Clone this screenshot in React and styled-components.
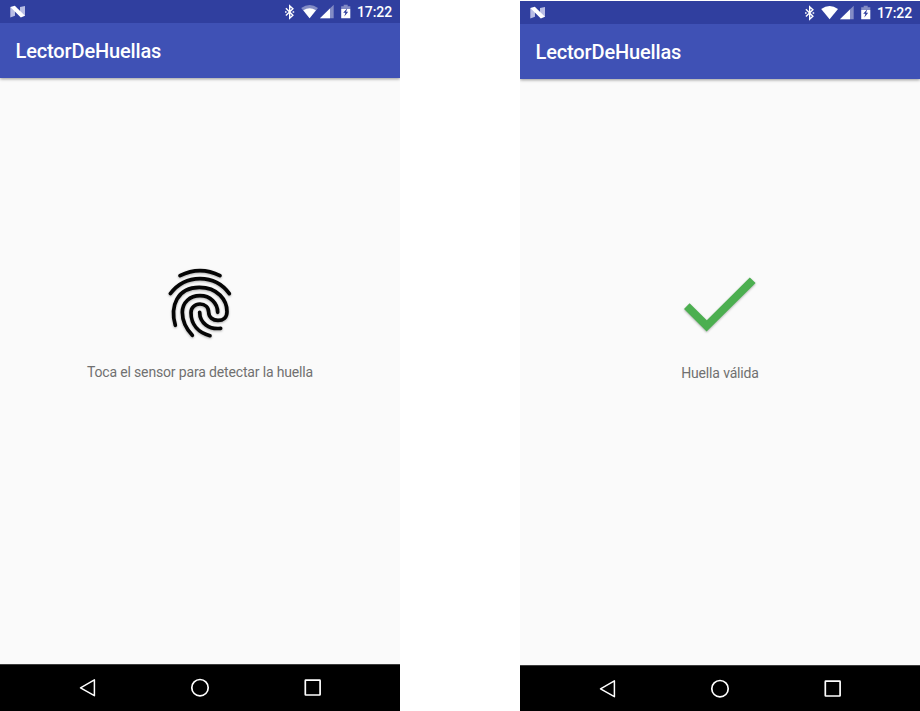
import React from "react";
import styled, { createGlobalStyle } from "styled-components";

const GlobalStyle = createGlobalStyle`
  * { box-sizing: border-box; }
  body { margin: 0; background: #fff; font-family: Roboto, "Liberation Sans", sans-serif; }
  svg { display: block; flex: none; }
`;

const Gallery = styled.main`
  display: flex;
  justify-content: space-between;
  width: 920px;
  height: 711px;
  overflow: hidden;
`;

const Phone = styled.section`
  display: flex;
  flex-direction: column;
  width: 400px;
  height: 711px;
  margin-top: ${({ $top }) => $top}px;
  background: #fafafa;
`;

const StatusBar = styled.div`
  display: flex;
  justify-content: space-between;
  height: 23px;
  flex: none;
  background: #303f9f;
  color: #fff;
`;

const StatusIcons = styled.div`
  display: flex;
`;

const Clock = styled.time`
  width: 43px;
  padding-top: 1px;
  font-size: 14px;
  font-weight: 500;
  line-height: 23px;
  letter-spacing: -0.1px;
  white-space: nowrap;
`;

const AppBar = styled.header`
  display: flex;
  align-items: center;
  height: 55px;
  flex: none;
  padding: 1px 16px 0 15.5px;
  background: #3f51b5;
  box-shadow: 0 1px 3px rgba(0, 0, 0, 0.4);
  clip-path: inset(0 0 -6px 0);
`;

const Title = styled.h1`
  margin: 0;
  color: #fff;
  font-size: 20px;
  font-weight: 500;
  line-height: 24px;
  letter-spacing: -0.14px;
`;

const Content = styled.div`
  display: flex;
  flex: 1;
  flex-direction: column;
  align-items: center;
  padding-top: 177px;
`;

const Message = styled.p`
  margin: 7px 0 0;
  color: #707070;
  font-size: 14px;
  line-height: 20px;
  letter-spacing: -0.155px;
`;

const NavigationBar = styled.nav`
  display: flex;
  justify-content: center;
  gap: 88.5px;
  height: 47px;
  flex: none;
  padding-top: 11px;
  border-top: 1px solid #3c3c3c;
  background: #000;
`;

const ResultIcon = styled.svg`
  width: 100px;
  height: 100px;
  filter: drop-shadow(0 1px 1px rgba(0, 0, 0, 0.3));
`;

function AndroidN() {
  return (
    <svg width="36" height="23" viewBox="0 0 36 23">
      <path d="M10.3 7 15 8.8v7l-4.7 1.7zM20 7l5-1v10l-5-2z" fill="#b8bde4" />
      <path d="M10.3 7 14.8 5.8 25 15.7 20.8 17.4z" fill="#fff" />
    </svg>
  );
}

function StatusSymbols({ fullWifi }) {
  return (
    <svg width="74" height="23" viewBox="0 0 74 23">
      <path d="m2.9 8.3 7 6.9-3.2 3V5.9l3.2 2.8-7 6.8" fill="none" stroke="#fff" strokeWidth="1.4" />
      <path d="M2 12h1.6M9.6 12h1.6" stroke="#fff" strokeWidth="1.5" />
      <path d="M18.2 7.9Q26.6 2.3 35 7.9L26.6 18.2z" fill={fullWifi ? "#fff" : "#838cc5"} />
      {!fullWifi && <path d="M20.3 10.3Q26.6 6 32.9 10.3L26.6 18.2z" fill="#fff" />}
      <path d="M50.7 4.8V18.2H37z" fill="#838cc5" />
      <path d="M47 8.4v9.8H37z" fill="#fff" />
      <path d="M58.2 6.2h2.5V4.8h4v1.4h2.6V9h-9.1z" fill="#838cc5" />
      <path d="M58.2 9h9.1v9.3h-9.1z" fill="#fff" />
      <path d="m64 8.5-3.8 4.3h2.2l-1.1 3.6 3.9-4.6h-2.1l1.1-3.3z" fill="#303f9f" />
    </svg>
  );
}

function Fingerprint() {
  return (
    <ResultIcon viewBox="0 0 300 300" fill="none" stroke="#050505" strokeWidth="11" strokeLinecap="round">
      <path d="M90 62Q150 32 210 62" />
      <path d="M61 116C84 86 115 71 150 71S216 86 238 116" />
      <path d="M76 211C59 153 82 97 148 97C203 97 231 135 231 170C231 188 219 196 204 196C189 196 176 187 176 172C176 157 165 147 150 147C134 147 123 158 123 173C123 210 147 233 180 242" />
      <path d="M127 241C106 219 97 200 97 172C97 142 120 122 150 122C181 122 203 145 203 172" />
      <path d="M149 172C149 205 178 224 212 220" />
    </ResultIcon>
  );
}

function CheckMark() {
  return (
    <ResultIcon viewBox="0 0 100 100">
      <path d="m14 53 5.6-5.7 17.2 17 43-42.9 5.8 5.6-49 48.4z" fill="#4caf50" />
    </ResultIcon>
  );
}

function BackIcon() {
  return <svg width="24" height="24" viewBox="0 0 24 24"><path d="M18.4 3.9v15.8L4.5 11.8z" fill="none" stroke="#fff" strokeWidth="1.5" strokeLinejoin="round" /></svg>;
}

function HomeIcon() {
  return <svg width="24" height="24" viewBox="0 0 24 24"><circle cx="12" cy="11.7" r="8.2" fill="none" stroke="#fff" strokeWidth="1.7" /></svg>;
}

function RecentIcon() {
  return <svg width="24" height="24" viewBox="0 0 24 24"><rect x="4.3" y="4.2" width="14.8" height="14.8" rx=".5" fill="none" stroke="#fff" strokeWidth="1.7" /></svg>;
}

function PhoneScreen({ top, fullWifi, message, children }) {
  return (
    <Phone $top={top}>
      <StatusBar>
        <AndroidN />
        <StatusIcons>
          <StatusSymbols fullWifi={fullWifi} />
          <Clock>17:22</Clock>
        </StatusIcons>
      </StatusBar>
      <AppBar><Title>LectorDeHuellas</Title></AppBar>
      <Content>
        {children}
        <Message>{message}</Message>
      </Content>
      <NavigationBar><BackIcon /><HomeIcon /><RecentIcon /></NavigationBar>
    </Phone>
  );
}

export default function App() {
  return (
    <>
      <GlobalStyle />
      <Gallery>
        <PhoneScreen top={0} message="Toca el sensor para detectar la huella">
          <Fingerprint />
        </PhoneScreen>
        <PhoneScreen top={1} fullWifi message="Huella válida">
          <CheckMark />
        </PhoneScreen>
      </Gallery>
    </>
  );
}
